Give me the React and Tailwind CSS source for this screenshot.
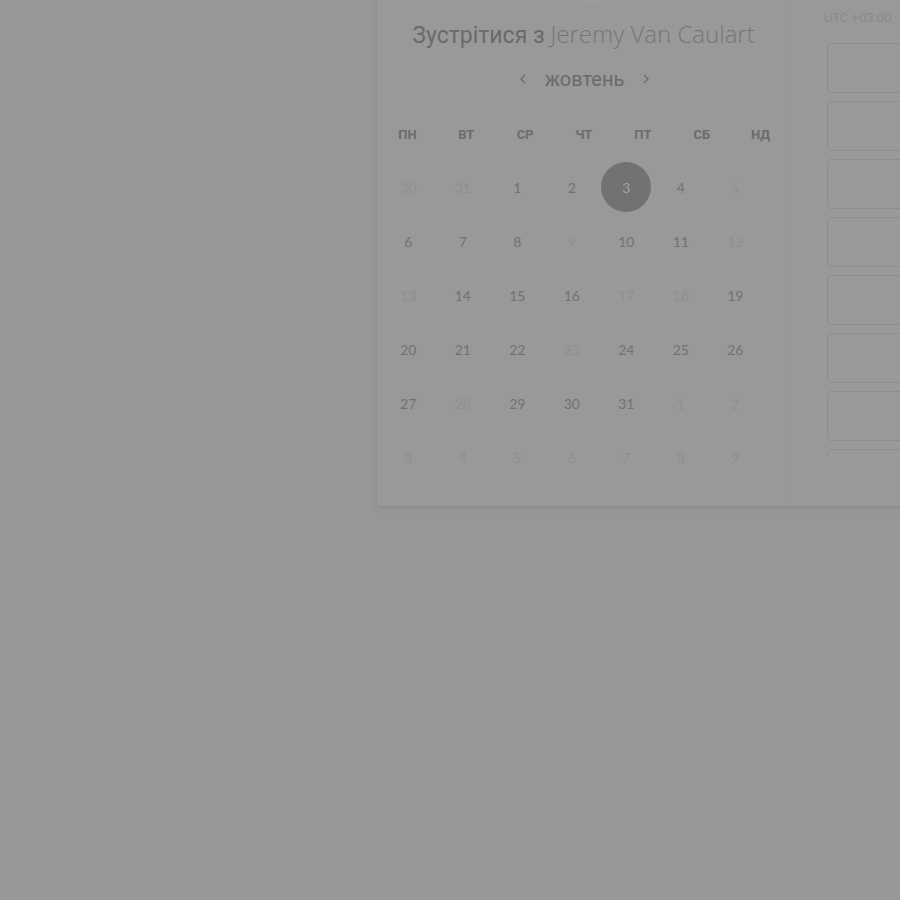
const weekdays = ["пн", "вт", "ср", "чт", "пт", "сб", "нд"];

// [day, enabled]
const days = [
  [30, false], [31, false], [1, true], [2, true], [3, true], [4, true], [5, false],
  [6, true], [7, true], [8, true], [9, false], [10, true], [11, true], [12, false],
  [13, false], [14, true], [15, true], [16, true], [17, false], [18, false], [19, true],
  [20, true], [21, true], [22, true], [23, false], [24, true], [25, true], [26, true],
  [27, true], [28, false], [29, true], [30, true], [31, true], [1, false], [2, false],
  [3, false], [4, false], [5, false], [6, false], [7, false], [8, false], [9, false],
];

const selected = 4;

const Chevron = ({ dir }) => (
  <svg width="8" height="12" viewBox="0 0 8 12" fill="none" stroke="#6a6a6a" strokeWidth="1.3">
    {dir === "left" ? <path d="M6 2 L2 6 L6 10" /> : <path d="M2 2 L6 6 L2 10" />}
  </svg>
);

export default function App() {
  return (
    <div className="min-h-screen w-full overflow-hidden bg-[#979797] font-['Roboto',sans-serif]">
      <div className="ml-[377px] flex h-[506px] w-[600px] bg-[#999999] shadow-[0_1px_6px_rgba(0,0,0,0.12)]">
        {/* Calendar */}
        <div className="relative flex w-[413px] flex-col">
          <div className="absolute left-[193px] top-[-48px] h-[50px] w-[50px] rounded-full border border-[#a3a3a3]" />
          <h1 className="mt-[18px] text-center text-[23px] leading-[32px] text-[#6a6a6a]">
            Зустрітися з{" "}
            <span className="font-['Open_Sans',sans-serif] text-[24px] font-light text-[#767676]">Jeremy Van Caulart</span>
          </h1>
          <div className="mt-[14px] flex items-center justify-center gap-[18px] pl-[2px]">
            <Chevron dir="left" />
            <span className="text-[20px] leading-[26px] text-[#6a6a6a]">жовтень</span>
            <Chevron dir="right" />
          </div>
          <div className="mt-[34px] grid grid-cols-7 pl-[1px]">
            {weekdays.map((d) => (
              <div key={d} className="text-center text-[13px] font-bold uppercase leading-[18px] text-[#6c6c6c]">
                {d}
              </div>
            ))}
          </div>
          <div className="ml-[4px] mt-[16px] grid grid-cols-[repeat(7,54.5px)] auto-rows-[54px]">
            {days.map(([d, on], i) => (
              <div key={i} className="flex items-center justify-center">
                {i === selected ? (
                  <span className="flex h-[50px] w-[50px] items-center justify-center rounded-full bg-[#727272] font-['Lato',sans-serif] text-[14px] text-[#a2a2a2]">
                    {d}
                  </span>
                ) : (
                  <span
                    className={`font-['Lato',sans-serif] text-[14px] ${on ? "text-[#727272]" : "text-[#8f8f8f]"}`}
                  >
                    {d}
                  </span>
                )}
              </div>
            ))}
          </div>
        </div>

        {/* Time slots */}
        <div className="flex flex-col border-l border-[#969696] pl-[33px]">
          <div className="mt-[9px] text-[13px] leading-[17px] text-[#8a8a8a]">UTC +03:00</div>
          <div className="ml-[3px] mt-[17px] flex h-[413px] flex-col gap-[8px] overflow-hidden">
            {Array.from({ length: 8 }).map((_, i) => (
              <div key={i} className="h-[50px] w-[120px] shrink-0 rounded-[4px] border border-[#8d8d8d]" />
            ))}
          </div>
        </div>
      </div>
    </div>
  );
}
